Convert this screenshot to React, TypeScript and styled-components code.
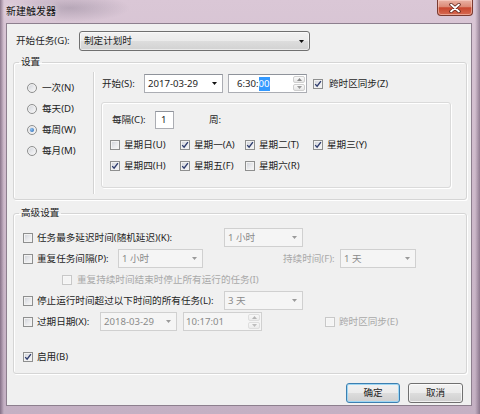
import React, { FC } from "react";
import styled, { createGlobalStyle, css } from "styled-components";

const GlobalStyle = createGlobalStyle`
  html, body {
    margin: 0;
    padding: 0;
  }
  body {
    width: 480px;
    height: 414px;
    overflow: hidden;
    font-family: "Noto Sans", "Noto Sans CJK SC", sans-serif;
    font-size: 9.6px;
    color: #1e1e1e;
  }
`;

const Window = styled.div`
  width: 480px;
  height: 414px;
  box-sizing: border-box;
  padding: 0 8px 8px 6px;
  display: flex;
  flex-direction: column;
  background:
    linear-gradient(90deg, rgba(80, 60, 85, 0.55) 0, rgba(80, 60, 85, 0) 4px, rgba(80, 60, 85, 0) 475px, rgba(80, 60, 85, 0.5) 480px),
    radial-gradient(ellipse 60px 14px at 70px 8px, rgba(120, 110, 130, 0.35), rgba(120, 110, 130, 0)),
    linear-gradient(180deg, #dac7d6 0%, #cfbbcc 40%, #c4b0c3 100%);
`;

const TitleBar = styled.div`
  height: 23px;
  display: flex;
  justify-content: space-between;
  align-items: flex-start;
`;

const Title = styled.span`
  margin-top: 4px;
  font-size: 10px;
  line-height: 14px;
  color: #111;
  text-shadow: 0 0 6px rgba(255, 255, 255, 0.8);
`;

const CloseButton = styled.div`
  width: 36px;
  height: 16px;
  margin-right: -1px;
  box-sizing: border-box;
  border: 1px solid #7a3a30;
  border-top: none;
  border-radius: 0 0 4px 4px;
  background: linear-gradient(180deg, #eab2a4 0%, #dc8a76 45%, #c8472e 52%, #d66a52 100%);
  box-shadow: inset 0 0 0 1px rgba(255, 220, 210, 0.5);
  display: flex;
  align-items: center;
  justify-content: center;
`;

const Client = styled.div`
  flex: 1;
  background: #f0f0f0;
  border: 1px solid #8d7f8e;
  padding: 0 4px 0 6px;
  display: flex;
  flex-direction: column;
`;

const Line = styled.div<{ $h?: number; $indent?: number; $top?: number }>`
  display: flex;
  align-items: center;
  height: ${(p) => p.$h ?? 21}px;
  padding-left: ${(p) => p.$indent ?? 0}px;
  margin-top: ${(p) => p.$top ?? 0}px;
  white-space: nowrap;
`;

const Label = styled.span<{ $w?: number; $off?: boolean; $gap?: number }>`
  flex: none;
  ${(p) => p.$w !== undefined && `width: ${p.$w}px;`}
  margin-left: ${(p) => p.$gap ?? 0}px;
  color: ${(p) => (p.$off ? "#a9a9a9" : "#1e1e1e")};
  line-height: 14px;
`;

type Kind = "list" | "edit" | "off";

const kinds = {
  list: css`
    border: 1px solid #707070;
    border-radius: 3px;
    background: linear-gradient(180deg, #f2f2f2 0%, #ebebeb 50%, #dddddd 51%, #d2d2d2 100%);
    box-shadow: inset 0 0 0 1px rgba(255, 255, 255, 0.55);
  `,
  edit: css`
    border: 1px solid #abadb3;
    border-top-color: #8f939b;
    background: #fff;
  `,
  off: css`
    border: 1px solid #d0d0d0;
    background: #f5f5f5;
    color: #8a8a8a;
  `,
};

const Field = styled.div<{ $w: number; $kind?: Kind; $pad?: number; $h?: number; $gap?: number }>`
  box-sizing: border-box;
  flex: none;
  width: ${(p) => p.$w}px;
  height: ${(p) => p.$h ?? 19}px;
  margin-left: ${(p) => p.$gap ?? 0}px;
  display: flex;
  align-items: center;
  padding: 0 1px 0 ${(p) => p.$pad ?? 3}px;
  white-space: nowrap;
  line-height: 14px;
  ${(p) => kinds[p.$kind ?? "edit"]}
`;

const ArrowSlot = styled.span`
  margin-left: auto;
  width: 13px;
  display: flex;
  justify-content: center;
`;

const Selected = styled.span`
  background: #3399ff;
  color: #fff;
`;

const Spin = styled.span<{ $off?: boolean }>`
  margin-left: auto;
  width: 12px;
  height: 15px;
  display: flex;
  flex-direction: column;
  gap: 1px;
  opacity: ${(p) => (p.$off ? 0.6 : 1)};
`;

const SpinHalf = styled.span`
  flex: 1;
  border: 1px solid #cfcfcf;
  border-radius: 2px;
  background: linear-gradient(180deg, #fafafa, #e6e6e6);
  display: flex;
  align-items: center;
  justify-content: center;
`;

const Box = styled.span<{ $off?: boolean; $round?: boolean; $gap?: number }>`
  flex: none;
  box-sizing: border-box;
  width: 10px;
  height: 10px;
  margin-left: ${(p) => p.$gap ?? 0}px;
  border: 1px solid ${(p) => (p.$off ? "#c8c8c8" : "#8e8f8f")};
  border-radius: ${(p) => (p.$round ? "50%" : "0")};
  background: ${(p) =>
    p.$off ? "#f4f4f4" : "linear-gradient(135deg, #cdd0d6 0%, #e9eaed 55%, #f8f8f8 100%)"};
  box-shadow: inset 0 0 0 1px ${(p) => (p.$off ? "#f7f7f7" : "#f2f2f2")};
  display: inline-flex;
  align-items: center;
  justify-content: center;
`;

const Dot = styled.span`
  width: 4px;
  height: 4px;
  border-radius: 50%;
  background: radial-gradient(circle at 35% 35%, #8cc1f0, #1f5fb0);
`;

const Legend = styled.legend`
  margin-left: 5px;
  padding: 0 2px;
  line-height: 14px;
`;

const Group = styled.fieldset<{ $top: number }>`
  margin: ${(p) => p.$top}px 0 0;
  padding: 0;
  min-width: 0;
  border: 1px solid #d5d5d5;
  border-radius: 3px;
  box-shadow: inset 1px 1px 0 #fff, 1px 1px 0 #fff;
`;

const SettingsBody = styled.div`
  display: flex;
`;

const RadioColumn = styled.div`
  width: 79px;
  box-sizing: border-box;
  padding: 8px 0 0 13px;
  display: flex;
  flex-direction: column;
`;

const Panel = styled.div`
  flex: 1;
  margin: 3px 0 5px;
  padding: 2px 0 6px 7px;
  border-left: 1px solid #d3d3d3;
  box-shadow: inset 1px 0 0 #fff;
`;

const WeekBox = styled.div`
  box-sizing: border-box;
  width: 350px;
  height: 86px;
  margin-top: 9px;
  padding: 8px 0 0 8px;
  border: 1px solid #dadada;
  border-radius: 3px;
  box-shadow: inset 1px 1px 0 #fff, 1px 1px 0 #fff;
`;

const DayGrid = styled.div`
  margin-top: 5px;
  display: grid;
  grid-template-columns: 70px 65px 68px auto;
  grid-auto-rows: 21px;
`;

const AdvancedBody = styled.div`
  padding: 7px 0 6px 9px;
`;

const ButtonRow = styled.div`
  margin-top: 9px;
  padding-right: 4px;
  display: flex;
  justify-content: flex-end;
  gap: 8px;
`;

const Button = styled.div<{ $w: number; $focus?: boolean }>`
  box-sizing: border-box;
  width: ${(p) => p.$w}px;
  height: 20px;
  border: 1px solid ${(p) => (p.$focus ? "#3c7fb1" : "#707070")};
  border-radius: 3px;
  background: linear-gradient(180deg, #f2f2f2 0%, #ebebeb 50%, #dddddd 51%, #cfcfcf 100%);
  box-shadow: inset 0 0 0 1px ${(p) => (p.$focus ? "#9ed6f3" : "rgba(255,255,255,0.7)")};
  display: flex;
  align-items: center;
  justify-content: center;
  line-height: 14px;
`;

const Arrow: FC<{ off?: boolean }> = ({ off }) => (
  <svg width="5" height="3" viewBox="0 0 5 3">
    <path d="M0 0h5L2.5 3z" fill={off ? "#9a9a9a" : "#111"} />
  </svg>
);

const Spinner: FC<{ off?: boolean }> = ({ off }) => (
  <Spin $off={off}>
    <SpinHalf>
      <svg width="5" height="3" viewBox="0 0 5 3">
        <path d="M0 3h5L2.5 0z" fill="#8a8a8a" />
      </svg>
    </SpinHalf>
    <SpinHalf>
      <Arrow off />
    </SpinHalf>
  </Spin>
);

const Tick: FC = () => (
  <svg width="8" height="8" viewBox="0 0 8 8">
    <path d="M1.2 4.1 L3.1 6.2 L6.9 1.2" fill="none" stroke="#2f3d6e" strokeWidth="1.4" />
  </svg>
);

const Check: FC<{ on?: boolean; off?: boolean; gap?: number }> = ({ on, off, gap }) => (
  <Box $off={off} $gap={gap}>
    {on && <Tick />}
  </Box>
);

const Radio: FC<{ on?: boolean; label: string }> = ({ on, label }) => (
  <Line>
    <Box $round>{on && <Dot />}</Box>
    <Label $gap={5}>{label}</Label>
  </Line>
);

const Day: FC<{ on?: boolean; label: string }> = ({ on, label }) => (
  <Line>
    <Check on={on} />
    <Label $gap={4}>{label}</Label>
  </Line>
);

const days: [string, boolean][] = [
  ["星期日(U)", false],
  ["星期一(A)", true],
  ["星期二(T)", true],
  ["星期三(Y)", true],
  ["星期四(H)", true],
  ["星期五(F)", true],
  ["星期六(R)", false],
];

const App: FC = () => (
  <>
    <GlobalStyle />
    <Window>
      <TitleBar>
        <Title>新建触发器</Title>
        <CloseButton>
          <svg width="12" height="10" viewBox="0 0 12 10">
            <path d="M2 1.5 L10 8.5 M10 1.5 L2 8.5" stroke="#5a2018" strokeWidth="3.4" strokeLinecap="round" />
            <path d="M2 1.5 L10 8.5 M10 1.5 L2 8.5" stroke="#fff" strokeWidth="1.8" strokeLinecap="round" />
          </svg>
        </CloseButton>
      </TitleBar>

      <Client>
        <Line $h={20} $indent={3} $top={7}>
          <Label $w={63}>开始任务(G):</Label>
          <Field $w={231} $h={20} $kind="list" $pad={4}>
            制定计划时
            <ArrowSlot>
              <Arrow />
            </ArrowSlot>
          </Field>
        </Line>

        <Group $top={4}>
          <Legend>设置</Legend>
          <SettingsBody>
            <RadioColumn>
              <Radio label="一次(N)" />
              <Radio label="每天(D)" />
              <Radio label="每周(W)" on />
              <Radio label="每月(M)" />
            </RadioColumn>
            <Panel>
              <Line $h={19} $indent={1}>
                <Label $w={42}>开始(S):</Label>
                <Field $w={79}>
                  2017-03-29
                  <ArrowSlot>
                    <Arrow />
                  </ArrowSlot>
                </Field>
                <Field $w={79} $gap={5} $pad={8}>
                  6:30:<Selected>00</Selected>
                  <Spinner />
                </Field>
                <Check on gap={6} />
                <Label $gap={6}>跨时区同步(Z)</Label>
              </Line>
              <WeekBox>
                <Line $h={18} $indent={2}>
                  <Label $w={43}>每隔(C):</Label>
                  <Field $w={19} $h={18} $pad={5}>
                    1
                  </Field>
                  <Label $gap={35}>周:</Label>
                </Line>
                <DayGrid>
                  {days.map(([label, on]) => (
                    <Day key={label} label={label} on={on} />
                  ))}
                </DayGrid>
              </WeekBox>
            </Panel>
          </SettingsBody>
        </Group>

        <Group $top={6}>
          <Legend>高级设置</Legend>
          <AdvancedBody>
            <Line>
              <Check />
              <Label $gap={4} $w={187}>
                任务最多延迟时间(随机延迟)(K):
              </Label>
              <Field $w={79} $kind="off">
                1 小时
                <ArrowSlot>
                  <Arrow off />
                </ArrowSlot>
              </Field>
            </Line>
            <Line>
              <Check />
              <Label $gap={4} $w={81}>
                重复任务间隔(P):
              </Label>
              <Field $w={85} $kind="off">
                1 小时
                <ArrowSlot>
                  <Arrow off />
                </ArrowSlot>
              </Field>
              <Label $gap={80} $w={57} $off>
                持续时间(F):
              </Label>
              <Field $w={76} $kind="off">
                1 天
                <ArrowSlot>
                  <Arrow off />
                </ArrowSlot>
              </Field>
            </Line>
            <Line $indent={39}>
              <Check off />
              <Label $gap={5} $off>
                重复持续时间结束时停止所有运行的任务(I)
              </Label>
            </Line>
            <Line>
              <Check />
              <Label $gap={4} $w={187}>
                停止运行时间超过以下时间的所有任务(L):
              </Label>
              <Field $w={79} $kind="off">
                3 天
                <ArrowSlot>
                  <Arrow off />
                </ArrowSlot>
              </Field>
            </Line>
            <Line>
              <Check />
              <Label $gap={4} $w={63}>
                过期日期(X):
              </Label>
              <Field $w={77} $kind="off">
                2018-03-29
                <ArrowSlot>
                  <Arrow off />
                </ArrowSlot>
              </Field>
              <Field $w={79} $gap={6} $kind="off" $pad={2}>
                10:17:01
                <Spinner off />
              </Field>
              <Check off gap={63} />
              <Label $gap={4} $off>
                跨时区同步(E)
              </Label>
            </Line>
            <Line $top={14}>
              <Check on />
              <Label $gap={4}>启用(B)</Label>
            </Line>
          </AdvancedBody>
        </Group>

        <ButtonRow>
          <Button $w={54} $focus>
            确定
          </Button>
          <Button $w={55}>取消</Button>
        </ButtonRow>
      </Client>
    </Window>
  </>
);

export default App;
